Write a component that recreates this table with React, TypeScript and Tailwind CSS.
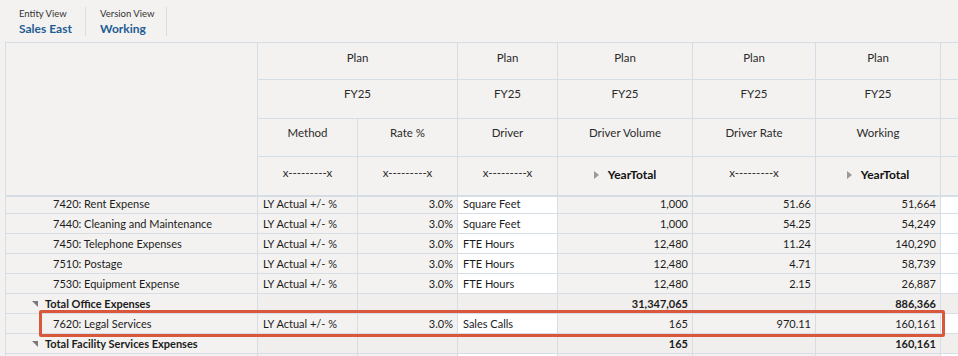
import React from 'react'

const cols = 'grid grid-cols-[252px_100px_100px_100px_135px_123px_125px_1fr]'
const line = 'border-[#d7dde4]'

type Row = {
  label: string
  method?: string
  rate?: string
  driver?: string
  vol?: string
  drate?: string
  working?: string
  total?: boolean
  first?: boolean
  blank?: boolean
}

const rows: Row[] = [
  { label: '7420: Rent Expense', method: 'LY Actual +/- %', rate: '3.0%', driver: 'Square Feet', vol: '1,000', drate: '51.66', working: '51,664', first: true },
  { label: '7440: Cleaning and Maintenance', method: 'LY Actual +/- %', rate: '3.0%', driver: 'Square Feet', vol: '1,000', drate: '54.25', working: '54,249' },
  { label: '7450: Telephone Expenses', method: 'LY Actual +/- %', rate: '3.0%', driver: 'FTE Hours', vol: '12,480', drate: '11.24', working: '140,290' },
  { label: '7510: Postage', method: 'LY Actual +/- %', rate: '3.0%', driver: 'FTE Hours', vol: '12,480', drate: '4.71', working: '58,739' },
  { label: '7530: Equipment Expense', method: 'LY Actual +/- %', rate: '3.0%', driver: 'FTE Hours', vol: '12,480', drate: '2.15', working: '26,887' },
  { label: 'Total Office Expenses', vol: '31,347,065', working: '886,366', total: true },
  { label: '7620: Legal Services', method: 'LY Actual +/- %', rate: '3.0%', driver: 'Sales Calls', vol: '165', drate: '970.11', working: '160,161' },
  { label: 'Total Facility Services Expenses', vol: '165', working: '160,161', total: true },
  { label: '', blank: true },
]

function Expanded() {
  return (
    <svg width="6" height="6" viewBox="0 0 6 6" className="shrink-0">
      <polygon points="0,0 6,0 6,6" fill="#7a7a7a" />
    </svg>
  )
}

function Play() {
  return (
    <svg width="5" height="8" viewBox="0 0 5 8" className="shrink-0">
      <polygon points="0,0 5,4 0,8" fill="#9a9a9a" />
    </svg>
  )
}

function HeadCell({ children, className = '' }: { children?: React.ReactNode; className?: string }) {
  return (
    <div className={`flex items-start justify-center border-r border-b ${line} leading-[16px] text-[11.5px] text-[#2b2b2b] ${className}`}>
      {children}
    </div>
  )
}

function DataRow({ r }: { r: Row }) {
  const h = r.first ? 'h-[17px]' : 'h-[20px]'
  const inner = r.first ? '-mt-[3px] h-[20px]' : 'h-full'
  const cell = `border-r border-b ${line} overflow-hidden`
  const txt = `${inner} flex items-center leading-[20px] whitespace-nowrap`
  const weight = r.total ? 'font-bold' : ''
  const detailBg = r.total ? 'bg-[#f0efed]' : 'bg-white'
  const rowBg = r.total ? 'bg-[#f0efed]' : ''
  return (
    <div className={`${cols} ${h} text-[11px] text-[#1c1c1c]`}>
      <div className={`border-r border-b ${line} overflow-hidden`}>
        {r.total ? (
          <div className={`${txt} pl-[26px] gap-[7px] font-bold`}>
            <Expanded />
            <span>{r.label}</span>
          </div>
        ) : (
          <div className={`${txt} pl-[47px]`}>{r.label}</div>
        )}
      </div>
      <div className={`${cell} ${rowBg}`}>
        <div className={`${txt} pl-[5px]`}>{r.method}</div>
      </div>
      <div className={`${cell} ${rowBg}`}>
        <div className={`${txt} justify-end pr-[4px]`}>{r.rate}</div>
      </div>
      <div className={`${cell} ${r.blank ? 'bg-white' : detailBg}`}>
        <div className={`${txt} pl-[5px]`}>{r.driver}</div>
      </div>
      <div className={`${cell} ${rowBg}`}>
        <div className={`${txt} justify-end pr-[4px] ${weight}`}>{r.vol}</div>
      </div>
      <div className={`${cell} ${rowBg}`}>
        <div className={`${txt} justify-end pr-[4px]`}>{r.drate}</div>
      </div>
      <div className={`${cell} ${rowBg}`}>
        <div className={`${txt} justify-end pr-[4px] ${weight}`}>{r.working}</div>
      </div>
      <div className={`border-b ${line} ${r.total ? rowBg : 'bg-white'}`} />
    </div>
  )
}

function ViewPicker({ label, value }: { label: string; value: string }) {
  return (
    <div className="w-[81px] h-[29px] mt-[7px] border-r border-[#dcdcdc] pl-[14px] flex flex-col justify-center">
      <span className="text-[9.5px] leading-[13px] text-[#333]">{label}</span>
      <span className="text-[12px] leading-[17px] font-bold text-[#1e5c95]">{value}</span>
    </div>
  )
}

export default function App() {
  return (
    <div className="relative w-[958px] h-[356px] overflow-hidden bg-[#f3f2f0] font-['Lato','Liberation_Sans',sans-serif]">
      {/* toolbar */}
      <div className="h-[42px] flex items-start pl-[5px]">
        <ViewPicker label="Entity View" value="Sales East" />
        <ViewPicker label="Version View" value="Working" />
      </div>

      {/* grid */}
      <div className={`ml-[5px] border-l border-t ${line}`}>
        <div className={`${cols} grid-rows-[37px_39px_38px_38px] border-b-2 ${line}`}>
          <div className={`row-span-4 border-r ${line}`} />
          <HeadCell className="col-span-2 pt-[7px]">Plan</HeadCell>
          <HeadCell className="pt-[7px]">Plan</HeadCell>
          <HeadCell className="pt-[7px]">Plan</HeadCell>
          <HeadCell className="pt-[7px]">Plan</HeadCell>
          <HeadCell className="pt-[7px]">Plan</HeadCell>
          <div className={`border-b ${line}`} />

          <HeadCell className="col-span-2 pt-[6px]">FY25</HeadCell>
          <HeadCell className="pt-[6px]">FY25</HeadCell>
          <HeadCell className="pt-[6px]">FY25</HeadCell>
          <HeadCell className="pt-[6px]">FY25</HeadCell>
          <HeadCell className="pt-[6px]">FY25</HeadCell>
          <div className={`border-b ${line}`} />

          <HeadCell className="pt-[6px]">Method</HeadCell>
          <HeadCell className="pt-[6px]">Rate %</HeadCell>
          <HeadCell className="pt-[6px]">Driver</HeadCell>
          <HeadCell className="pt-[6px]">Driver Volume</HeadCell>
          <HeadCell className="pt-[6px]">Driver Rate</HeadCell>
          <HeadCell className="pt-[6px]">Working</HeadCell>
          <div className={`border-b ${line}`} />

          <HeadCell className="pt-[8px] border-b-0 text-[10px]">x---------x</HeadCell>
          <HeadCell className="pt-[8px] border-b-0 text-[10px]">x---------x</HeadCell>
          <HeadCell className="pt-[8px] border-b-0 text-[10px]">x---------x</HeadCell>
          <HeadCell className="pt-[10px] border-b-0">
            <span className="flex items-center h-[16px] gap-[9px] font-bold text-[12px] text-[#111]">
              <Play />
              YearTotal
            </span>
          </HeadCell>
          <HeadCell className="pt-[8px] border-b-0 text-[10px]">x---------x</HeadCell>
          <HeadCell className="pt-[10px] border-b-0">
            <span className="flex items-center h-[16px] gap-[9px] font-bold text-[12px] text-[#111]">
              <Play />
              YearTotal
            </span>
          </HeadCell>
          <div />
        </div>

        {rows.map((r, i) => (
          <DataRow key={i} r={r} />
        ))}
      </div>

      {/* highlight around the edited row */}
      <div className="absolute left-[39px] top-[310px] w-[906px] h-[27px] border-[3px] border-[#d9583c] rounded-[2px] pointer-events-none" />
    </div>
  )
}
